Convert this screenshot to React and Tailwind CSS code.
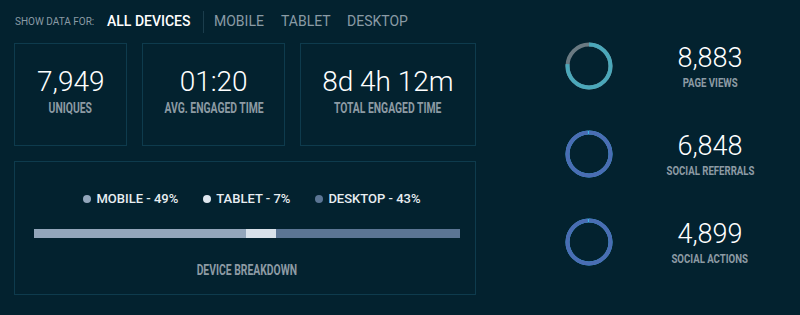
import React from 'react';

const stats = [
  { value: '7,949', label: 'UNIQUES', w: 'w-[114px]' },
  { value: '01:20', label: 'AVG. ENGAGED TIME', w: 'w-[143px]' },
  { value: '8d 4h 12m', label: 'TOTAL ENGAGED TIME', w: 'w-[177px]' },
];

const legend = [
  { label: 'MOBILE - 49%', dot: 'bg-[#93a6bb]' },
  { label: 'TABLET - 7%', dot: 'bg-[#dfe7ef]' },
  { label: 'DESKTOP - 43%', dot: 'bg-[#5b7594]' },
];

const social = [
  { value: '8,883', label: 'PAGE VIEWS', main: '#4ba8ba', rest: '#6a7a82', frac: 0.76 },
  { value: '6,848', label: 'SOCIAL REFERRALS', main: '#4a6db3', rest: '#3bb3e6', frac: 0.985 },
  { value: '4,899', label: 'SOCIAL ACTIONS', main: '#4a6db3', rest: '#3bb3e6', frac: 0.985 },
];

const Ring = ({ main, rest, frac }) => {
  const r = 21.5;
  const c = 2 * Math.PI * r;
  return (
    <svg width="48" height="48" viewBox="0 0 48 48">
      <circle cx="24" cy="24" r={r} fill="none" stroke={rest} strokeWidth="4" />
      <circle
        cx="24"
        cy="24"
        r={r}
        fill="none"
        stroke={main}
        strokeWidth="4"
        strokeDasharray={`${c * frac} ${c}`}
        transform="rotate(-90 24 24)"
      />
    </svg>
  );
};

// condensed caps label (DIN-ish look)
const label = "font-['Roboto',sans-serif] font-bold whitespace-nowrap scale-x-[0.74] origin-center";
const num = "font-['Roboto','Liberation_Sans',sans-serif] font-light";

export default function App() {
  return (
    <div className="w-[800px] h-[315px] bg-[#03222f] flex overflow-hidden font-['Roboto',sans-serif]">
      <div className="pl-[14px] w-[476px] shrink-0 flex flex-col">
        <div className="h-[43px] flex items-center">
          <span className="text-[10px] text-[#8a9ba5] ml-[1px] w-[92px]">SHOW DATA FOR:</span>
          <span className="text-[14px] text-white font-medium w-[96px]">ALL DEVICES</span>
          <div className="w-px h-[22px] bg-[#1b3d4c]" />
          <span className="text-[14px] text-[#8a9ba5] ml-[10px] w-[67px]">MOBILE</span>
          <span className="text-[14px] text-[#8a9ba5] w-[66px]">TABLET</span>
          <span className="text-[14px] text-[#8a9ba5]">DESKTOP</span>
        </div>
        <div className="flex gap-[15px] h-[103px]">
          {stats.map((s) => (
            <div key={s.label} className={`${s.w} border border-[#0e3b4d] flex flex-col items-center pt-[21px]`}>
              <div className={`${num} text-[28px] leading-[34px] text-white`}>{s.value}</div>
              <div className={`${label} text-[14px] leading-[16px] text-[#8d9ba4] mt-[1px]`}>{s.label}</div>
            </div>
          ))}
        </div>
        <div className="mt-[15px] h-[134px] border border-[#0e3b4d] flex flex-col items-center">
          <div className="flex items-center gap-[25px] mt-[27px] ml-[14px]">
            {legend.map((l) => (
              <div key={l.label} className="flex items-center">
                <span className={`w-[8px] h-[8px] rounded-full ${l.dot}`} />
                <span className="text-[13px] font-medium text-[#e8eef2] ml-[5px]">{l.label}</span>
              </div>
            ))}
          </div>
          <div className="flex w-[426px] h-[9px] mt-[20px] ml-[4px]">
            <div className="w-[212px] bg-[#93a6bb]" />
            <div className="w-[30px] bg-[#d8e1ea]" />
            <div className="flex-1 bg-[#5b7594]" />
          </div>
          <div className={`${label} text-[14px] text-[#8d9ba4] mt-[22px] ml-[4px]`}>DEVICE BREAKDOWN</div>
        </div>
      </div>
      <div className="flex-1 flex flex-col pt-[22px]">
        {social.map((s) => (
          <div key={s.label} className="h-[88px] flex items-center">
            <div className="ml-[89px]">
              <Ring main={s.main} rest={s.rest} frac={s.frac} />
            </div>
            <div className="w-[130px] ml-[32px] flex flex-col items-center">
              <div className={`${num} text-[27px] leading-[30px] text-white`}>{s.value}</div>
              <div className={`${label} text-[13px] leading-[14px] text-[#8d9ba4] mt-[3px]`}>{s.label}</div>
            </div>
          </div>
        ))}
      </div>
    </div>
  );
}
